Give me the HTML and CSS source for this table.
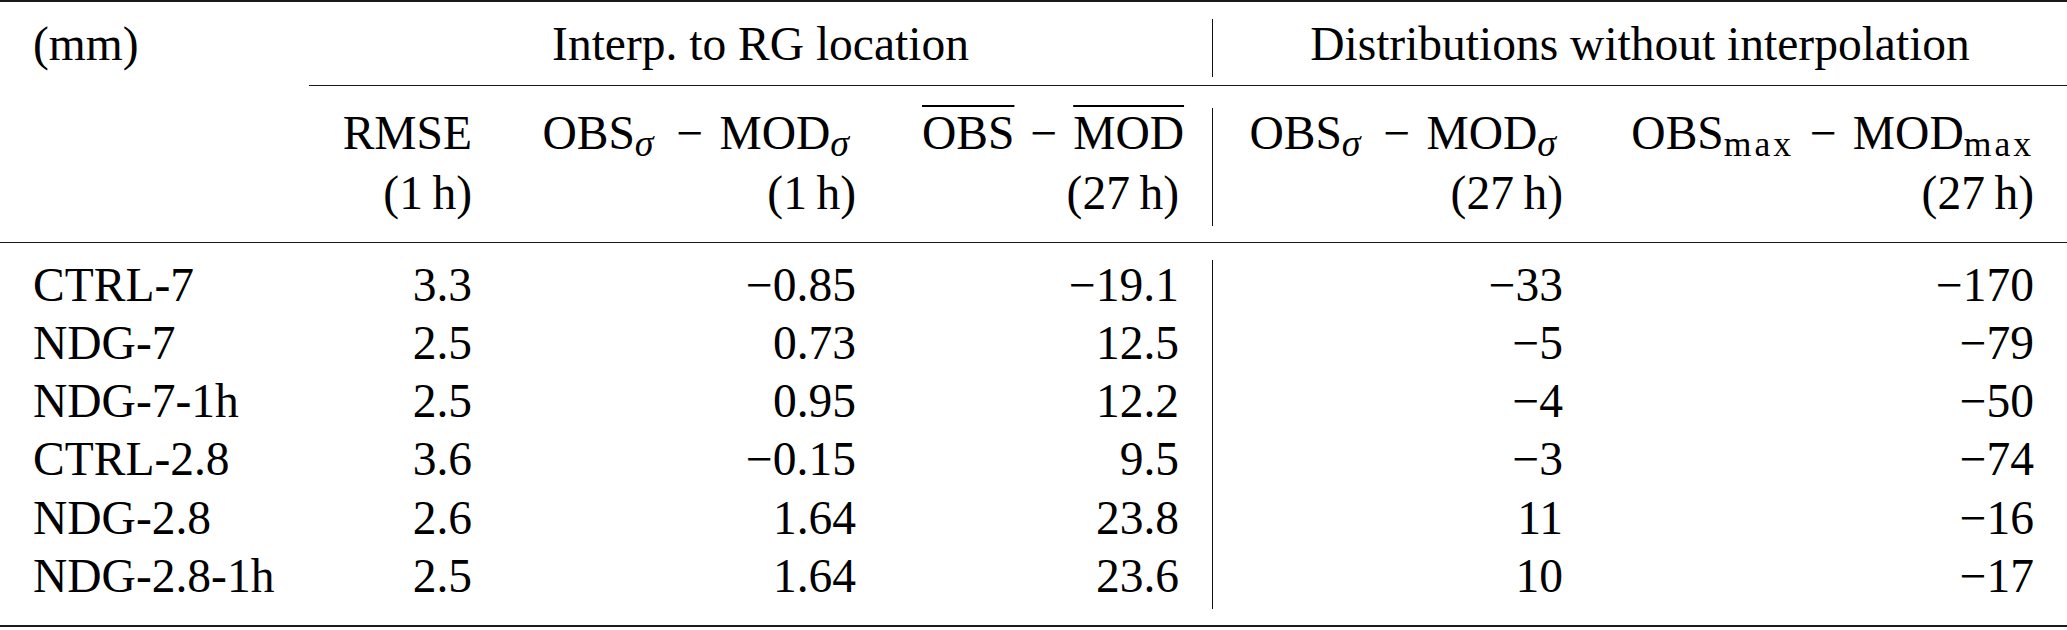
FILE: index.html
```html
<!DOCTYPE html>
<html lang="en">
<head>
<meta charset="utf-8">
<title>Table</title>
<link rel="stylesheet" href="styles.css">
</head>
<body>
<div class="tbl">
  <div class="rule rule-top"></div>

  <div class="c">(mm)</div>
  <div class="c ctr span3">Interp. to RG location</div>
  <div class="c ctr span2 bar">Distributions without interpolation</div>

  <div class="cmid"></div>

  <div class="c hd"></div>
  <div class="c hd r"><div class="ln">RMSE</div><div class="ln">(1&#8201;h)</div></div>
  <div class="c hd r"><div class="ln">OBS<sub class="sg">σ</sub><span class="op">−</span>MOD<sub class="sg">σ</sub></div><div class="ln">(1&#8201;h)</div></div>
  <div class="c hd r"><div class="ln"><span class="ov">OBS</span><span class="op">−</span><span class="ov">MOD</span></div><div class="ln">(27&#8201;h)</div></div>
  <div class="c hd r bar"><div class="ln">OBS<sub class="sg">σ</sub><span class="op">−</span>MOD<sub class="sg">σ</sub></div><div class="ln">(27&#8201;h)</div></div>
  <div class="c hd r"><div class="ln">OBS<sub class="mx">max</sub><span class="op">−</span>MOD<sub class="mx">max</sub></div><div class="ln">(27&#8201;h)</div></div>

  <div class="rule rule-mid"></div>

  <div class="c b">CTRL-7</div><div class="c b r">3.3</div><div class="c b r">−0.85</div><div class="c b r">−19.1</div><div class="c b r bar">−33</div><div class="c b r">−170</div>
  <div class="c b">NDG-7</div><div class="c b r">2.5</div><div class="c b r">0.73</div><div class="c b r">12.5</div><div class="c b r bar">−5</div><div class="c b r">−79</div>
  <div class="c b">NDG-7-1h</div><div class="c b r">2.5</div><div class="c b r">0.95</div><div class="c b r">12.2</div><div class="c b r bar">−4</div><div class="c b r">−50</div>
  <div class="c b">CTRL-2.8</div><div class="c b r">3.6</div><div class="c b r">−0.15</div><div class="c b r">9.5</div><div class="c b r bar">−3</div><div class="c b r">−74</div>
  <div class="c b">NDG-2.8</div><div class="c b r">2.6</div><div class="c b r">1.64</div><div class="c b r">23.8</div><div class="c b r bar">11</div><div class="c b r">−16</div>
  <div class="c b">NDG-2.8-1h</div><div class="c b r">2.5</div><div class="c b r">1.64</div><div class="c b r">23.6</div><div class="c b r bar">10</div><div class="c b r">−17</div>

  <div class="rule rule-bot"></div>
</div>
</body>
</html>
```

FILE: styles.css
```css
html, body {
  margin: 0;
  padding: 0;
  background: #ffffff;
}

.tbl {
  display: grid;
  grid-template-columns: 309px 196px 384px 323px 384px 1fr;
  width: 2067px;
  font-family: "Liberation Serif", "Times New Roman", serif;
  font-size: 47.5px;
  color: #000000;
}

.rule {
  grid-column: 1 / -1;
  border-top: 2px solid #1a1a1a;
}

.rule-top {
  margin-bottom: 17px;
}

.rule-mid {
  border-top-width: 1.5px;
  margin-top: 16px;
  margin-bottom: 16.5px;
}

.rule-bot {
  border-top-width: 2.5px;
  margin-top: 16px;
}

.cmid {
  grid-column: 2 / -1;
  border-top: 1.5px solid #1a1a1a;
  margin: 8px 0 22px;
}

.c {
  font-family: "Liberation Serif", "Times New Roman", serif;
  padding: 0 33px 8px;
  line-height: 50px;
  white-space: nowrap;
}

.b {
  padding-bottom: 8.333px;
}

.hd .ln + .ln {
  margin-top: 10px;
}

.r {
  text-align: right;
}

.ctr {
  text-align: center;
}

.span3 {
  grid-column: span 3;
}

.span2 {
  grid-column: span 2;
}

.bar {
  border-left: 1.2px solid #111111;
}

.op {
  margin: 0 16px;
}

.sg,
.mx {
  font-family: "Liberation Serif", "Times New Roman", serif;
  line-height: 0;
  vertical-align: -7px;
}

.sg {
  font-size: 0.8em;
  font-style: italic;
  padding-right: 7px;
}

.mx {
  font-size: 0.75em;
  letter-spacing: 3px;
}

.ov {
  text-decoration: overline;
  text-decoration-thickness: 1.5px;
}
```
